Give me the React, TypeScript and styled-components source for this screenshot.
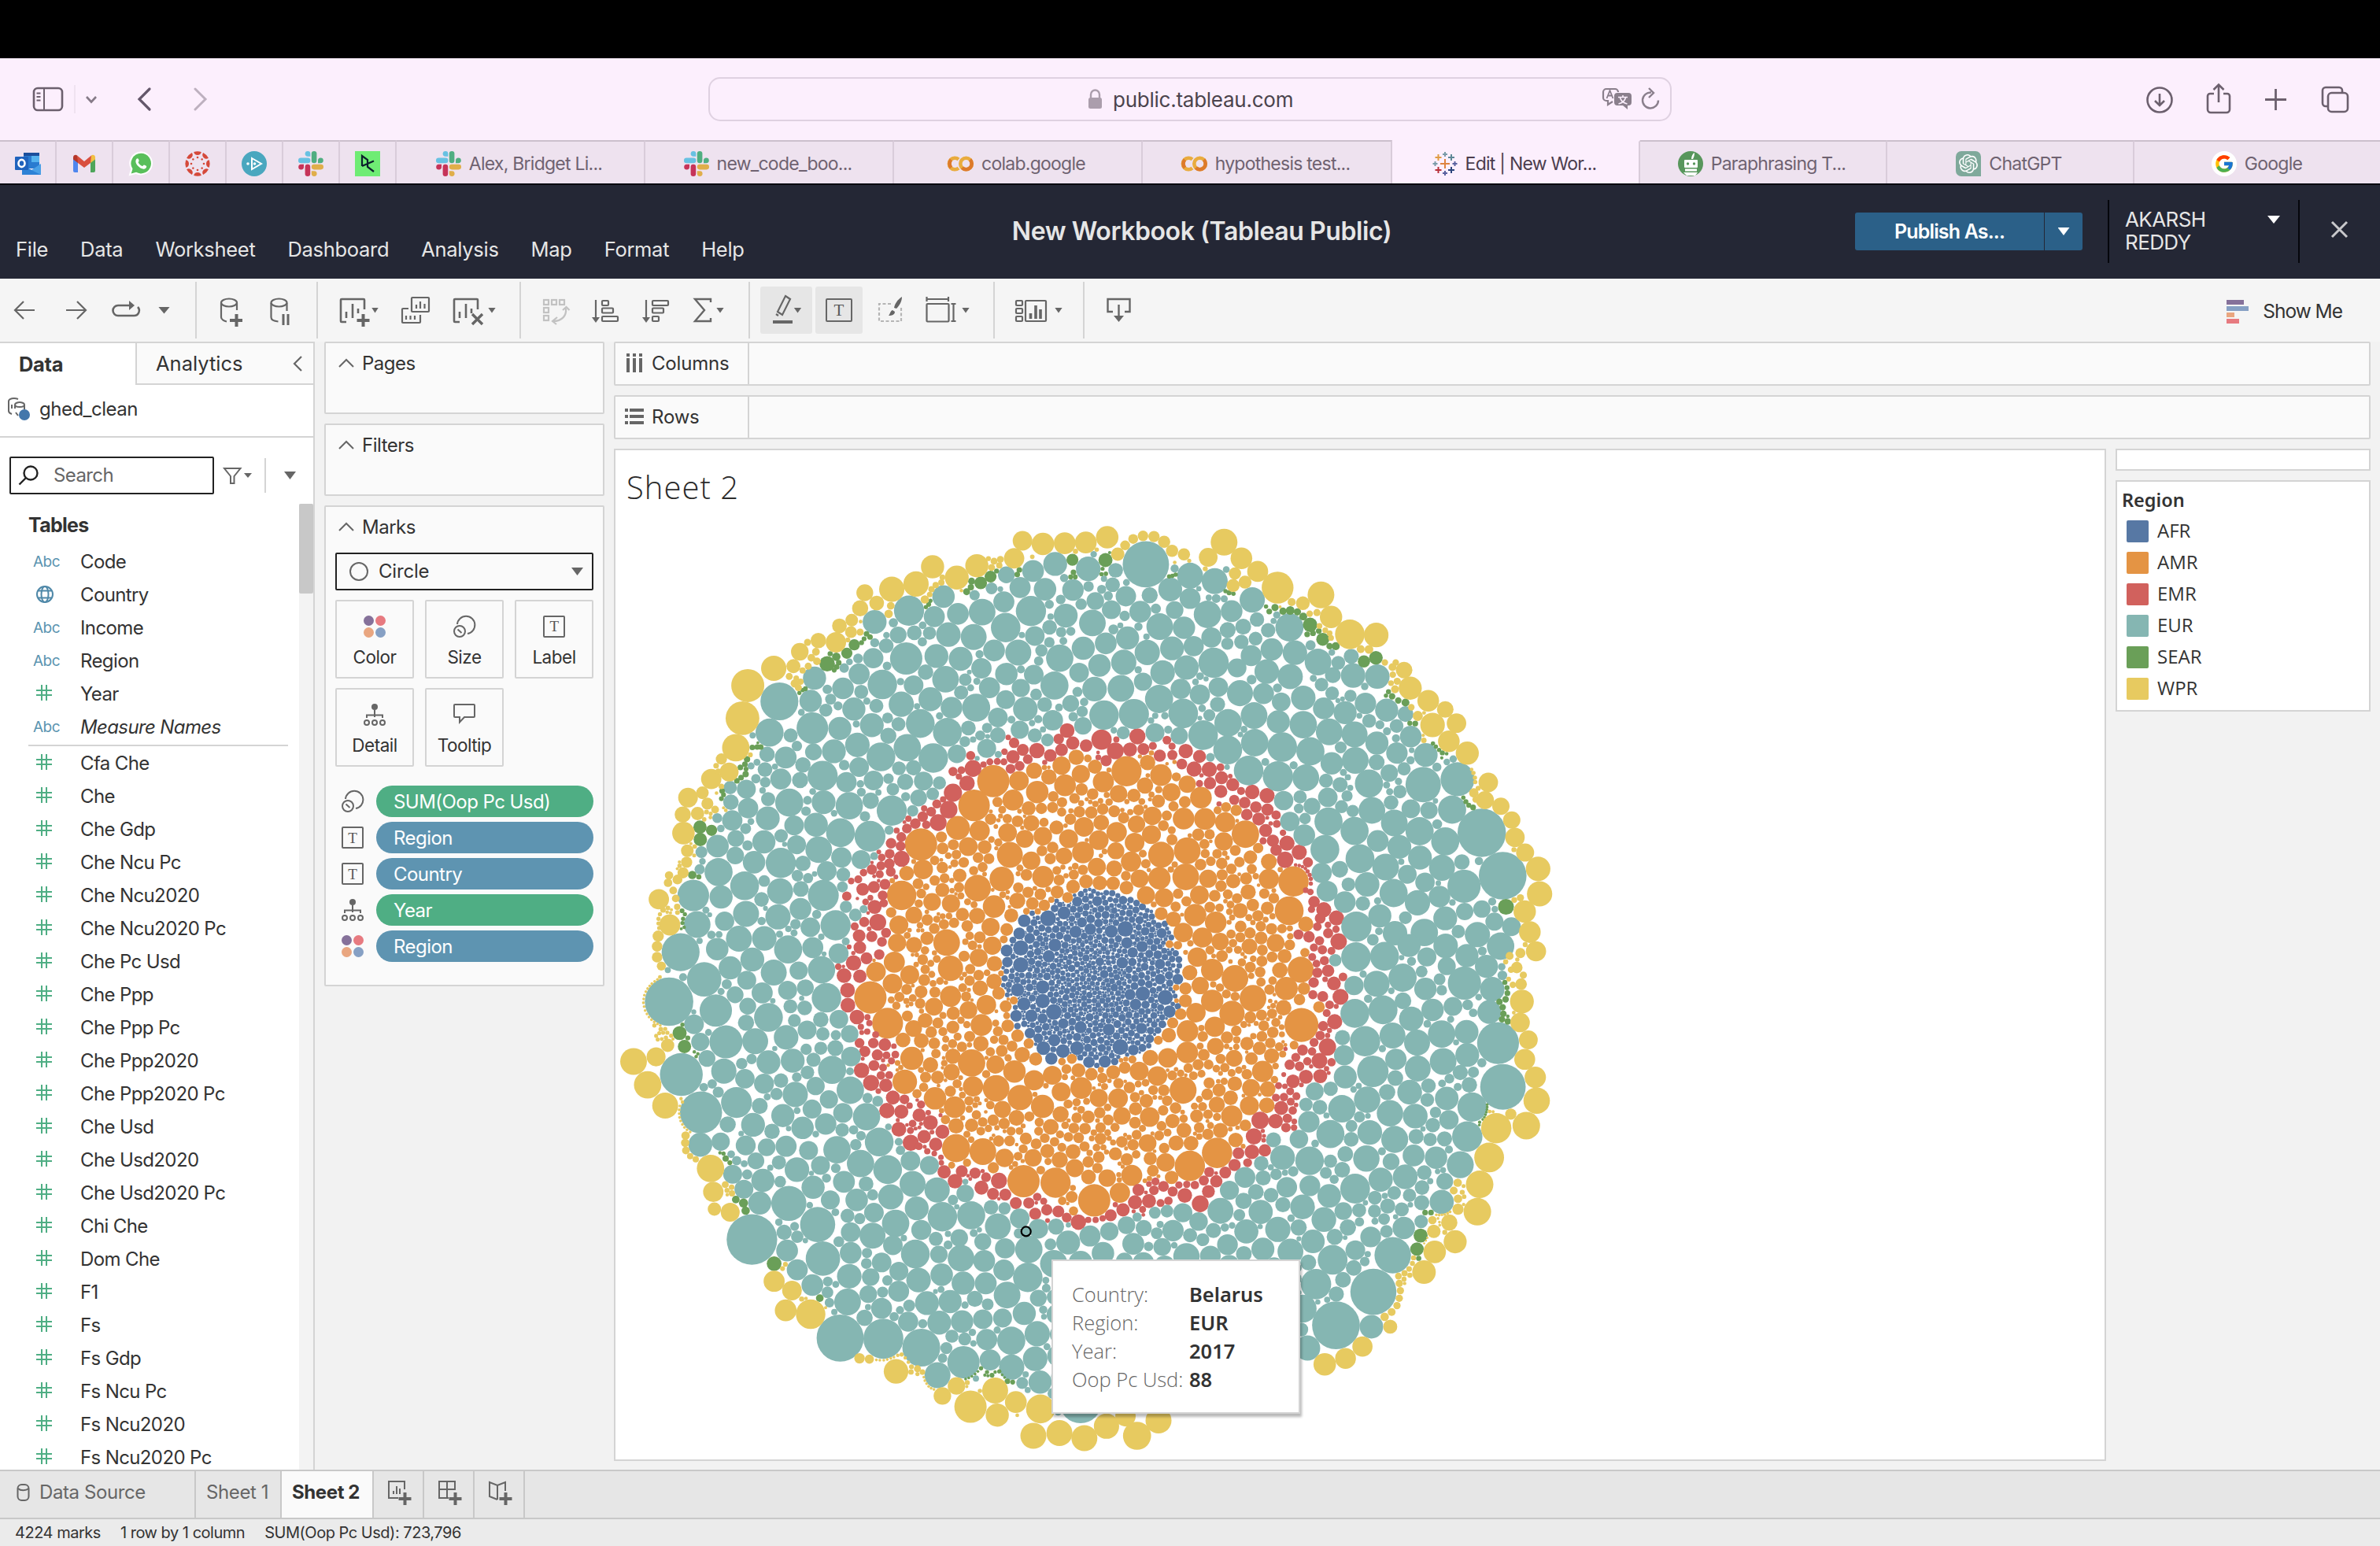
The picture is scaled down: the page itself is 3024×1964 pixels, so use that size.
import React from 'react';
import styled, { createGlobalStyle, css } from 'styled-components';
import { FcGoogle } from 'react-icons/fc';
import { SiOpenai } from 'react-icons/si';

const Global = createGlobalStyle`
  *, *::before, *::after { box-sizing: border-box; }
  body { margin: 0; background: #f2f2f2; color: #333; font-family: Inter, "Liberation Sans", sans-serif; }
`;

const LINE = '#d4d4d4';
const INK = '#666';

/* ------------------------------------------------------------------ */
/* Packed bubble data                                                   */
/* ------------------------------------------------------------------ */

type Region = 'AFR' | 'AMR' | 'EMR' | 'EUR' | 'SEAR' | 'WPR';
type Mark = { x: number; y: number; r: number; g: Region };

const COLORS: Record<Region, string> = {
  AFR: '#5778a4',
  AMR: '#e49444',
  EMR: '#d1615d',
  EUR: '#85b6b2',
  SEAR: '#6a9f58',
  WPR: '#e7ca60',
};

/* Each sector lists its leading marks as "x,y,r" in its own units. */
type Sector = { x: number; y: number; ux: number; uy: number; marks: Partial<Record<Region, string>> };

const SECTORS: Sector[] = [
  {
    x: 780, y: 420, ux: 2.24, uy: 2.24,
    marks: {
      WPR: '455,961,36 381,1010,47 366,1103,48 347,1187,39 328,1256,27 277,1276,29 306,1219,16 211,1329,28 196,1377,23 198,1430,32 252,1315,18 266,1346,17 238,1374,19 209,1480,18 207,1513,16 197,1543,16 157,1550,12 181,1562,14 511,955,20 529,914,25 582,882,22 575,914,11 551,887,10 632,887,29 675,858,17 642,840,21 677,824,18 701,790,23 714,746,24 748,775,21 788,783,11 782,806,12 791,736,36 860,721,36 907,672,33 976,703,34 1033,669,33 1139,648,29 1163,598,28 1221,607,32 1283,605,31 1343,603,31 1404,588,32 1434,636,19 1455,611,14 1478,593,14 1506,584,15 1537,586,16 1100,651,10 1082,656,10 1075,674,10 1066,649,7 1097,668,9 916,724,9 932,717,9 904,736,9 899,751,8 885,765,12 935,702,8 701,858,10 666,880,7 562,931,11 578,941,11 553,955,10 537,967,9 499,984,10 519,989,8 515,1004,12 531,999,9 525,1016,10 291,1238,8 297,1254,8 306,1297,8 288,1363,11',
      SEAR: '607,948,22 633,928,12 663,918,16 684,894,16 712,877,7 705,888,7 719,863,8 729,872,8 640,945,8 634,957,8 627,966,7 245,1413,19 278,1422,16 246,1448,19 379,1220,9 373,1234,8 360,1243,8 376,1248,7 375,1262,9 362,1272,8 350,1281,8 394,1186,8 408,1185,8 418,1185,8 308,1310,8 312,1321,7 306,1332,7 223,1549,12 1305,652,17 1399,653,20 1308,688,8 1300,701,7 1313,701,7 1388,693,6 1072,700,17 1044,718,18 1018,713,10 1016,730,9 1004,743,10 1154,681,8 1148,694,8 1089,684,7 901,769,6 896,779,7 888,787,6 545,1019,7 537,1023,6 528,1031,6',
      EUR: '471,1055,54 443,1144,40 560,1054,32 571,989,33 742,829,34 840,797,43 938,757,32 1193,684,31 1256,664,34 1117,695,24 1350,678,35 1428,682,21 1514,665,66 912,814,30 979,806,31 1048,801,38 1110,772,30 1156,731,30 1227,736,32 1187,798,43 1115,845,42 832,933,46 918,926,34 952,865,35 1024,872,37 987,934,34 1082,910,31 1151,916,37 1198,869,28 1286,811,34 1362,832,38 1416,794,27 1498,800,31 1269,932,39 1336,904,33 1400,890,31 1462,875,33 1518,916,36 1451,944,36 1382,953,32 764,1007,42 698,977,30 738,932,29 652,1018,31 853,1009,28 944,992,38 1046,961,29 1117,977,32 1195,979,28 1324,973,28 1254,1010,40 1368,1020,35 1443,1018,38 1506,999,26 818,1063,36 901,1049,34 961,1073,31 1031,1073,40 1069,1016,30 1115,1050,27 1158,1017,26 1171,1077,35 1093,1101,28 872,1118,41 949,1143,41 734,1123,34 683,1077,33 643,1132,33 565,1131,45 626,1197,34 693,1179,35 760,1213,41 835,1187,39 909,1216,42 698,1242,28 1061,1189,27 1395,1094,42 1480,1091,43 1335,1125,25 1540,1144,27 489,1215,31 568,1199,24 594,1267,43 475,1276,30 662,1285,29 739,1280,28 538,1236,22 530,1279,23 377,1305,27 436,1206,22 430,1249,21 499,1343,40 597,1342,34 670,1352,39 791,1366,43 382,1359,29 438,1388,34 337,1394,29 645,1429,41 729,1439,44 575,1406,34 513,1408,28 583,1477,38 427,1455,33 295,1467,32 347,1445,24 520,1463,27 475,1515,43 399,1513,32 298,1541,40 606,1538,28 538,1516,22 867,1330,24 881,1282,27 829,1284,23 853,1244,22 1198,1152,20 1234,1165,18 333,1342,22 331,1300,19 503,1152,20 810,1120,20 781,1153,23 747,1068,20 704,1028,20 809,866,24 855,860,21 775,897,21 887,972,22 1009,1131,21 1240,844,21 1226,1064,21 1300,1061,24 439,1333,20',
      AMR: '1080,1282,46 1025,1351,45 874,1462,46 1459,1254,43 1136,1336,30 1205,1313,32 1284,1294,31 1274,1238,26 1316,1214,22 1393,1284,30 1329,1262,26 1369,1241,20 1196,1252,23 1153,1281,28 1238,1270,22 1519,1229,22 1557,1265,31 979,1415,34 1041,1423,29 1127,1492,37 1338,1412,28 1431,1427,29 1294,1446,27 1335,1485,31 1380,1450,28 1482,1457,28 1530,1434,27 1472,1511,29 880,1533,28 833,1544,21',
      EMR: '1290,1138,21 1388,1164,29 1490,1155,23 1427,1196,24 1469,1192,20 1507,1191,17 1306,1174,19 1344,1181,18 1266,1162,15 1274,1193,18 1242,1209,18 1204,1195,22 1164,1193,17 1136,1213,19 1178,1220,14 1155,1239,14 1129,1247,14 1022,1246,24 1005,1288,22 965,1315,26 953,1363,25 923,1400,24 879,1383,15 903,1369,14 919,1347,13 883,1360,9 937,1334,9 858,1403,15 889,1406,12 834,1417,14 818,1441,14 789,1459,15 816,1467,14 785,1489,14 819,1503,23 784,1517,15 760,1523,13 788,1540,14 1401,1224,16 989,1251,11 982,1269,9 1052,1235,9 1070,1227,10 1091,1226,10 1110,1227,10',
    },
  },
  {
    x: 1300, y: 640, ux: 2.1778, uy: 2.1778,
    marks: {
      WPR: '390,105,17 412,130,17 445,140,17 512,148,26 556,106,37 604,151,30 649,187,29 704,232,44 586,193,17 614,217,18 581,226,18 824,252,37 774,275,19 743,272,11 852,313,31 904,361,41 977,363,34 793,304,9 813,301,10 934,402,11 957,403,12 1054,460,23 1071,510,32 1121,545,30 1168,569,23 1199,607,27 1133,612,34 1178,657,30 1229,690,32 1031,439,9 1022,452,11 1001,439,9 1023,473,9 1035,491,10 1018,496,8 1029,513,11 1092,587,14 1074,563,9 1287,771,27 1278,820,25 1322,837,24 1352,875,24 1361,923,27 1389,965,25 1425,1010,34 1429,1079,35 1388,1128,31 1402,1185,30 1419,1238,28 1380,1377,33 1375,1435,27 1398,1483,26 1388,1537,29 1247,800,13 1252,818,9 1259,787,7 1366,1283,16 1376,1243,14 1346,1251,11 1350,1289,9 1384,1304,10 1378,1329,16 1355,1331,9 1376,1090,10 1359,1096,8 1246,745,6 1250,758,6 1251,770,6 1241,735,5 820,338,8 836,350,8 848,358,8 852,371,8',
      SEAR: '794,335,20 829,375,18 943,436,17 976,426,19 775,312,11 739,295,12 759,299,10 719,297,10 697,287,10 681,298,8 672,284,6 848,394,9 865,394,11 818,352,8 802,358,8 786,361,8 1058,550,11 1038,544,9 1021,533,9 1011,520,7 1004,531,6 1070,607,7 1085,608,8 1134,663,6 1142,672,6 1151,681,6 1160,689,7 1336,1115,22 1218,813,6 1225,824,7 1233,834,7 1245,840,8 1333,1324,7 1339,1339,7 1340,1354,8 1335,1371,9 1318,1378,9 1327,1393,9 1329,1411,9 1325,1426,9 1341,1432,9 570,246,7 582,249,6 560,242,6 404,201,6 413,199,6 422,196,6',
      EUR: '462,199,36 530,214,36 634,266,35 407,237,33 462,262,29 510,306,38 577,297,30 737,342,39 378,340,37 445,343,31 521,370,28 527,440,42 452,453,34 344,411,36 412,400,33 472,394,28 688,403,31 752,412,34 816,438,37 908,422,21 913,475,34 980,478,34 739,478,35 674,464,34 600,524,36 775,537,34 665,525,29 631,420,29 592,454,26 567,606,38 639,586,37 706,603,32 775,611,38 832,566,30 891,578,32 498,640,41 566,681,40 641,661,38 717,673,41 795,685,39 847,631,37 917,638,36 443,580,41 376,540,39 386,467,34 436,512,28 489,528,28 624,738,41 705,754,42 782,758,37 854,718,31 919,710,37 979,662,32 1006,571,32 1058,582,22 1114,695,33 1107,777,49 1202,762,47 957,774,39 965,848,37 1187,846,39 1269,910,67 1327,1029,66 1027,883,37 1097,906,39 1168,934,39 845,879,39 917,905,39 835,956,40 738,879,27 778,917,30 932,982,40 1003,1005,37 1041,949,33 1098,979,33 1159,1007,36 1220,1058,46 952,1053,34 1025,1077,39 1091,1104,35 1152,1087,30 841,1072,29 826,1021,28 890,1102,30 922,1170,42 987,1140,32 1110,1186,38 1168,1147,33 1029,1188,34 1257,1192,35 1304,1156,25 1351,1170,26 1321,1224,38 1282,1280,32 1228,1250,32 1169,1223,34 921,1254,41 1000,1252,40 1068,1222,32 978,1328,36 1050,1311,39 1113,1342,31 1172,1279,25 1221,1326,46 1298,1343,34 918,1410,40 996,1400,40 1051,1375,23 1133,1400,31 1074,1425,34 1290,1406,33 1314,1492,58 1158,1467,38 1227,1461,33 1022,1471,36 946,1487,42 1090,1491,36 888,1526,28 1229,1525,33 1162,1543,37 981,933,30 978,715,22 1073,844,26 1123,848,24 366,632,28 432,642,24 843,812,27 540,507,27 538,555,21 714,548,26 609,340,22 566,349,22 565,387,17 604,382,20 643,373,19 678,350,20 647,320,20 857,474,22 872,440,19 855,524,19 1063,1025,26 1112,1047,27 877,777,21 912,850,17 881,838,18 900,1053,19',
      AMR: '393,753,41 492,813,30 615,914,38 559,881,28 503,872,30 444,871,30 454,776,24 344,717,22 382,971,36 454,960,37 450,1032,37 377,1036,31 748,1045,42 736,1126,40 680,1038,28 476,1138,31 533,1158,30 340,1083,25 390,1090,26 443,1186,27 496,1200,28 545,1211,24 523,1290,31 482,1254,27 586,1313,37 636,1368,37 768,1289,36 728,1341,32 523,1375,31 578,1410,35 770,1442,47 478,1408,27 530,1447,28 455,1459,30 454,1518,30 259,908,28 168,894,28 297,991,28 166,965,30 55,1032,30 322,1037,25 400,1533,27 352,1533,22 357,915,26 308,937,27 782,1163,21 680,990,22 416,1149,21 382,1134,18 286,1062,19 249,1050,19 212,1049,20 174,1045,19 138,1059,19 94,1074,18 461,1297,21 490,1333,24 428,1221,12 449,1341,17 449,1375,18 436,1412,16 403,1470,20',
      EMR: '450,684,20 488,699,18 439,720,15 473,734,21 515,735,21 549,758,18 547,796,18 580,777,18 517,773,17 634,797,20 675,807,21 613,827,16 644,839,16 676,846,17 652,872,18 619,860,16 671,904,18 700,861,13 702,886,11 691,932,17 730,939,21 764,964,21 725,985,23 788,992,14 700,958,16 719,910,9 805,1101,16 832,1123,21 867,1146,21 873,1211,23 791,1198,16 844,1188,14 822,1147,15 798,1122,10 814,1170,12 820,1209,13 828,1234,13 853,1237,11 800,1254,11 844,1292,17 860,1327,19 878,1364,22 814,1297,14 829,1363,15 862,1433,21 830,1445,14 842,1503,24 820,1541,22 822,1471,13 848,1386,12 378,697,17 412,671,10 413,695,14 546,729,11 488,774,10 840,1409,11 754,999,5 764,1001,5 773,1004,5 781,1009,5 787,1017,6 793,1027,6 796,1038,6 796,1051,6 795,1074,9 782,1069,8',
      AFR: '69,1147,22 283,1176,22 244,1183,18 145,1184,17 113,1132,18 205,1099,14 383,1188,14 329,1225,16 287,1215,16 88,1221,18 71,1252,17 85,1406,22 54,1376,20 54,1337,19 331,1355,20 393,1366,21 428,1315,15 405,1405,17 311,1385,16 269,1503,22 305,1511,15 149,1506,19 110,1514,19 56,1506,19 86,1484,17 237,1455,17 159,1448,17 226,1543,17 182,1545,16 78,1535,17 224,1301,12 160,1080,9 195,1072,7 230,1076,8 262,1084,7 297,1096,9 330,1115,10 356,1142,9 392,1162,9 410,1200,8 422,1244,9 432,1278,8 428,1390,9 385,1440,11 350,1480,12 330,1505,11',
    },
  },
  {
    x: 780, y: 1100, ux: 2.24, uy: 2.0524,
    marks: {
      WPR: '56,510,38 120,498,27 96,571,39 146,625,37 153,468,19 128,87,29 159,154,30 157,22,11 154,44,12 182,41,14 126,183,16 123,210,15 123,238,15 135,261,13 169,64,11 176,85,11 180,107,9 204,703,12 203,722,12 205,742,11 217,757,9 233,765,9 275,789,39 283,850,29 286,895,19 331,903,27 317,831,10 335,838,8 336,854,9 456,1083,30 507,1107,28 489,1159,31 560,1169,42 488,1039,7 480,1050,7 699,1284,15 727,1286,13 803,1318,35 935,1382,25 975,1356,25 1015,1410,46 1085,1368,37 1091,1432,33 1144,1398,31 1214,1416,41 1194,1486,37 1268,1479,37 1339,1492,37 1402,1461,36 1456,1435,29 1489,1486,40 1550,1446,37 864,1311,10 847,1306,7 878,1320,8 864,1325,6 140,115,8 131,126,6 127,138,6 127,150,6 129,162,6 124,296,4 116,301,4 108,307,4 102,313,4 96,320,4 91,328,4 87,337,4 85,347,4 84,357,4 86,367,4 89,377,4 94,386,4 100,394,4 107,401,4 115,407,4 124,412,4 132,416,4 146,425,6 152,435,6 148,448,6 163,443,6 191,607,5 195,616,5 188,626,4 186,636,4 186,646,4 187,656,4 190,665,4 195,674,4 201,682,4 208,688,4 217,694,4 747,1288,4 757,1289,4 768,1289,4 778,1287,4 788,1284,4 797,1281,4 808,1276,5 819,1274,6 829,1283,5 838,1294,5 882,1333,4 885,1342,4 890,1350,4 896,1357,4 903,1362,4 911,1365,4',
      SEAR: '187,436,20 201,471,19 195,414,6 229,485,5 239,490,5 234,497,5 456,1037,21 586,1127,11 347,870,11 369,879,13 375,899,12 302,748,5 312,750,6 318,763,9 330,774,7 194,117,7 202,126,6 197,138,6 195,149,6 200,160,5 1120,1344,8 1135,1346,7 1076,1328,7 1062,1320,6 1045,1310,6 1097,1318,6 1036,1318,4 1028,1325,4 1019,1331,4 1010,1335,4 1001,1338,4 1085,1320,5 1105,1327,4 1112,1334,4',
      EUR: '157,354,69 190,225,54 192,544,61 248,643,60 257,296,49 226,77,45 290,377,46 237,153,38 319,459,47 402,457,37 440,395,41 313,535,36 246,727,34 349,617,44 228,413,28 246,459,26 265,502,24 338,804,27 498,880,50 393,974,72 415,879,33 580,935,50 595,1024,49 493,1003,31 522,1053,30 565,1093,31 670,1070,35 665,1137,38 644,1231,67 767,1233,57 875,1256,54 921,1328,37 995,1294,46 372,52,41 305,81,33 376,125,37 473,66,37 596,77,44 467,133,36 531,112,31 631,155,43 559,160,28 356,190,37 428,189,35 294,217,32 496,218,40 394,244,34 566,213,30 331,266,33 455,278,37 591,271,39 605,344,42 422,331,30 621,532,40 673,585,39 440,512,34 509,508,34 490,447,35 516,596,36 481,651,33 537,683,32 396,675,34 719,654,39 755,720,41 635,740,39 702,776,39 779,792,41 490,731,30 521,792,35 424,820,33 567,838,33 850,829,37 788,863,36 862,893,34 920,845,36 935,915,42 1017,911,40 1093,940,37 1000,854,25 802,932,39 736,964,37 691,871,32 740,904,28 794,989,28 858,1012,41 867,1080,35 933,1066,32 988,1023,38 994,1088,33 891,1140,34 957,1136,33 926,1191,34 991,1188,32 1119,1119,38 1178,1073,42 1181,1000,39 1168,1167,33 1131,1238,40 1132,1307,36 1071,1288,30 1205,1220,36 1199,1285,35 1213,1346,33 1328,1398,60 1061,1235,30 1050,1182,28 1106,1179,27 1155,919,28 1208,946,28 1293,982,34 1355,965,30 1054,1030,31 1110,1054,30 674,1009,31 674,955,28 762,1034,28 811,1057,27 844,769,28 898,781,27 304,719,26 404,769,24 675,497,28 671,438,25 370,843,27 1252,1037,39 1328,1035,34 1392,1010,32 1459,937,25 1410,953,26 545,318,24 550,428,27 543,370,21 526,273,26 378,298,27 345,336,24 381,366,24 376,409,23 574,574,26 564,634,27 612,609,26 652,644,28 554,742,27 588,781,27 616,871,27 731,1072,25 724,1117,25 925,1013,25 983,970,25 1208,1127,24 687,128,18 450,692,22 324,674,23 1508,944,23 1162,1348,17',
      AMR: '819,77,42 730,343,46 779,410,44 848,502,33 828,563,35 914,606,32 970,629,31 974,736,40 1050,745,38 1166,822,46 1257,826,43 1367,872,46 1440,852,29 947,200,38 958,267,36 958,340,30 1018,514,39 1088,580,38 1156,604,36 1220,627,33 1140,536,32 1330,579,31 1035,58,38 1104,34,35 1082,106,32 1248,546,27 1196,559,29 1046,415,31 798,251,30 842,284,27 793,307,28 811,154,27 746,276,28 1060,362,28 1474,807,30 1446,652,25 1525,655,28 1547,548,28 1495,535,27 1022,575,29 1077,208,26 1083,255,22 1082,301,22 1072,159,26 806,201,26 854,206,23 1148,91,23 1131,129,20 1118,166,18 1191,98,18 1095,332,18 1115,366,17 1121,417,18 1149,443,18 1162,492,22 853,424,24 886,403,21 875,456,21 823,454,21 901,519,22 965,496,22 1086,518,26 1273,589,27 1380,605,26 1435,606,28 1322,533,20 1288,530,14 1359,543,18 1421,538,20 1454,526,17 1351,811,21 1404,814,25 1193,761,25 974,678,22 1018,676,19 1303,863,17 1080,787,16',
      EMR: '751,147,24 742,107,20 740,55,17 708,61,18 698,182,18 700,213,18 682,253,22 655,286,21 700,288,19 665,324,21 666,363,21 692,394,21 734,184,16 719,241,17 755,231,15 763,198,14 705,533,22 732,566,23 774,572,19 771,466,18 714,484,16 750,493,16 699,462,14 794,604,20 777,638,22 818,641,20 811,687,21 845,722,23 869,650,19 901,669,21 883,706,19 916,726,19 935,693,20 827,609,14 940,798,19 971,822,21 990,796,17 1028,801,16 1046,839,20 1096,821,23 1079,855,17 1114,857,17 1144,879,17 1181,879,16 1199,907,17 1232,897,16 1265,901,17 1322,929,22 1414,911,17 1449,897,19 1205,863,12 1289,917,14 1483,877,20 1493,845,17 1523,874,20 1059,812,14 765,77,14 768,97,12 1350,923,9 1371,923,9 1391,919,9 850,672,11 844,690,10 868,731,11 892,744,9 912,750,8 931,760,8 703,420,9 721,432,9 727,410,9 745,440,10 776,494,11 801,492,11 797,470,8',
      AFR: '1168,143,18 1154,176,17 1158,214,22 1158,258,22 1118,221,17 1120,251,15 1281,122,18 1149,323,19 1167,360,19 1145,391,17 1188,391,18 1221,352,20 1220,315,18 1252,381,23 1237,237,17 1184,436,15 1208,449,14 1222,475,20 1246,502,18 1279,483,20 1132,288,9 1124,310,9 1117,275,8 1168,412,9',
    },
  },
  {
    x: 1480, y: 1300, ux: 2.8, uy: 2.8,
    marks: {
      WPR: '1318,192,38 1323,275,47 1286,364,49 1231,323,20 1179,373,54 1154,477,53 1120,573,49 1112,670,49 1033,777,41 960,813,40 922,885,42 1012,709,29 957,740,24 1043,661,20 1043,624,15 1042,567,15 1028,595,14 952,700,15 1058,601,9 1063,579,7 885,834,9 881,854,9 869,874,10 853,889,11 831,899,12 851,910,9 834,925,13 838,951,13 834,978,13 826,1004,13 807,1027,14 782,1044,15 802,1079,25 703,1150,36 643,1192,37 569,1213,40 966,681,5 976,682,5 986,681,5 996,680,5 1006,676,5 1015,671,5 972,694,5 977,707,5 978,718,5 934,763,4 929,773,4 923,783,4',
      SEAR: '910,755,25 897,803,24 926,673,10 947,673,10 1120,352,6 1119,362,5 1131,342,5 1137,334,5 1141,325,5 1144,316,5 1146,307,5 1147,298,5 1147,289,5',
      EUR: '1203,226,81 1093,298,52 1076,403,54 1051,503,48 985,635,43 811,825,65 742,955,82 609,1074,85 735,1079,42 508,1155,45 538,928,54 490,1015,50 597,841,53 740,171,56 822,128,38 900,161,46 989,133,47 1076,112,42 720,272,47 871,245,44 801,320,47 630,304,49 891,330,44 1003,267,42 589,394,50 729,388,44 818,413,48 717,481,47 885,470,39 965,478,40 515,489,51 419,477,44 768,556,43 677,588,53 855,546,44 585,614,42 490,653,44 566,698,44 402,733,45 341,671,43 290,740,43 198,667,46 285,548,37 527,776,42 850,728,40 447,812,46 349,803,41 223,787,37 642,191,41 638,115,35 477,412,33 516,578,37 533,242,32 678,807,35 996,562,30 912,705,24 77,829,47 120,705,33 64,674,34 162,828,37 230,594,34 805,492,30 642,465,28 631,521,28 791,245,29 820,195,28 1051,175,27 894,403,27 995,411,27 944,413,24 938,222,26 923,531,26 915,584,26 914,638,27 793,650,27 816,603,24 843,662,25 672,870,28 634,912,28 610,963,27 476,726,29 350,550,27 343,498,26 173,737,27 265,682,21 280,632,29 324,600,28 378,611,26 420,645,27 281,820,28 90,754,25',
      AMR: '186,461,54 89,507,54 65,238,48 348,171,38 238,330,38 301,293,34 81,30,37 80,105,38 307,230,32 252,415,26 366,234,28 363,292,28 180,82,30 234,265,26 380,116,27 249,215,26 24,548,24 40,426,27',
      EMR: '579,83,30 551,136,27 553,188,25 502,190,25 456,206,24 414,301,25 394,348,26 339,345,31 317,402,29 310,457,26 356,452,22 262,462,21 248,504,22 215,531,21 183,562,22 155,598,23 126,642,30 71,612,26 436,338,17 446,242,14 424,262,15 448,279,14 455,310,15 158,529,18 139,559,18 431,371,17 479,153,17 466,121,16 555,43,16 531,68,16 524,100,15 507,135,15 28,598,18 13,631,15 107,575,15 78,573,13 50,575,13',
    },
  },
];

const CENTER = { x: 1387, y: 1245 };

function makeRandom(seed: number) {
  let s = seed;
  return () => {
    s = (s + 0x6d2b79f5) | 0;
    let t = Math.imul(s ^ (s >>> 15), 1 | s);
    t = (t + Math.imul(t ^ (t >>> 7), 61 | t)) ^ t;
    return ((t ^ (t >>> 14)) >>> 0) / 4294967296;
  };
}

function leadingMarks(): Mark[] {
  const out: Mark[] = [];
  for (const s of SECTORS) {
    for (const g of Object.keys(s.marks) as Region[]) {
      for (const item of s.marks[g]!.split(' ')) {
        const [a, b, c] = item.split(',').map(Number);
        const m = { x: s.x + a / s.ux, y: s.y + b / s.uy, r: c / s.ux, g };
        // sectors share their edges: a mark listed in both is kept once
        const twin = out.some((o) => Math.hypot(o.x - m.x, o.y - m.y) < Math.max(o.r, m.r) * 0.6);
        if (!twin) out.push(m);
      }
    }
  }
  return out;
}

function packMarks(): Mark[] {
  const rnd = makeRandom(4224);
  const lead = leadingMarks();
  const all: Mark[] = [];
  const CELL = 14;
  const grid = new Map<number, Mark[]>();
  const cellsOf = (x: number, y: number, r: number, fn: (k: number) => void) => {
    for (let i = Math.floor((x - r) / CELL); i <= Math.floor((x + r) / CELL); i++)
      for (let j = Math.floor((y - r) / CELL); j <= Math.floor((y + r) / CELL); j++) fn(i * 1000 + j);
  };
  const add = (m: Mark) => {
    all.push(m);
    cellsOf(m.x, m.y, m.r, (k) => {
      const c = grid.get(k);
      if (c) c.push(m);
      else grid.set(k, [m]);
    });
  };
  const near = (x: number, y: number, r: number) => {
    const set = new Set<Mark>();
    cellsOf(x, y, r, (k) => grid.get(k)?.forEach((m) => set.add(m)));
    return [...set];
  };
  lead.forEach(add);

  // outline of the whole cluster, one radius for every 4 degrees
  const BINS = 90;
  const outline = new Array(BINS).fill(0);
  const binOf = (x: number, y: number) =>
    Math.floor(((Math.atan2(y - CENTER.y, x - CENTER.x) + Math.PI) / (2 * Math.PI)) * BINS) % BINS;
  for (const m of lead) {
    const b = binOf(m.x, m.y);
    outline[b] = Math.max(outline[b], Math.hypot(m.x - CENTER.x, m.y - CENTER.y));
  }
  for (let b = 0; b < BINS; b++) if (outline[b] < 500) outline[b] = 540;
  const inside = (x: number, y: number) => {
    const b = binOf(x, y);
    const lim = Math.min(outline[b], outline[(b + 1) % BINS], outline[(b + BINS - 1) % BINS]);
    return Math.hypot(x - CENTER.x, y - CENTER.y) < lim - 4;
  };

  const memo = new Map<number, Region>();
  const regionAt = (x: number, y: number): Region => {
    const k = Math.floor(x / 5) * 2000 + Math.floor(y / 5);
    const hit = memo.get(k);
    if (hit) return hit;
    let best = 1e9;
    let g: Region = 'EUR';
    for (const m of lead) {
      const d = Math.hypot(m.x - x, m.y - y) - m.r;
      if (m.g === 'SEAR' && d > 3) continue;
      if (d < best) {
        best = d;
        g = m.g;
      }
    }
    memo.set(k, g);
    return g;
  };

  const place = (x: number, y: number, r: number, g: Region): boolean => {
    const around = near(x, y, r * 3);
    let clear = 1e9;
    for (const m of around) clear = Math.min(clear, Math.hypot(m.x - x, m.y - y) - m.r);
    if (clear < r * 0.7) return false;
    const ring = around
      .map((m) => ({ m, d: Math.hypot(m.x - x, m.y - y) - m.r }))
      .filter((o) => o.d < r * 2.6)
      .sort((a, b) => a.d - b.d)
      .slice(0, 7)
      .map((o) => o.m);
    let bx = x;
    let by = y;
    let bd = 1e9;
    const free = (px: number, py: number) => around.every((m) => Math.hypot(m.x - px, m.y - py) >= m.r + r - 0.12);
    for (let i = 0; i < ring.length; i++) {
      for (let j = i + 1; j < ring.length; j++) {
        const A = ring[i];
        const B = ring[j];
        const ra = A.r + r;
        const rb = B.r + r;
        const dx = B.x - A.x;
        const dy = B.y - A.y;
        const d = Math.hypot(dx, dy);
        if (d > ra + rb || d < 0.5) continue;
        const a = (ra * ra - rb * rb + d * d) / (2 * d);
        const h2 = ra * ra - a * a;
        if (h2 < 0) continue;
        const h = Math.sqrt(h2);
        for (const s of [1, -1]) {
          const px = A.x + (a * dx) / d - (s * h * dy) / d;
          const py = A.y + (a * dy) / d + (s * h * dx) / d;
          const q = Math.hypot(px - x, py - y);
          if (q < bd && q < r * 1.8 && free(px, py)) {
            bd = q;
            bx = px;
            by = py;
          }
        }
      }
    }
    if (bd > 1e8 && clear < r) return false;
    add({ x: bx, y: by, r, g });
    return true;
  };

  const RANGE: Record<Region, [number, number]> = {
    AFR: [99, 0],
    AMR: [2.2, 12],
    EMR: [2.2, 7],
    EUR: [3, 14],
    SEAR: [1.8, 3.4],
    WPR: [1.7, 3.6],
  };
  const R0 = 610;
  for (const base of [14, 12, 10.5, 9, 8, 7, 6.2, 5.5, 4.8, 4.2, 3.6, 3.1, 2.7, 2.3, 2]) {
    const tries = base > 9 ? 5000 : base > 4 ? 8000 : 6500;
    for (let i = 0; i < tries; i++) {
      const t = rnd() * Math.PI * 2;
      const q = Math.sqrt(rnd()) * R0;
      const x = CENTER.x + Math.cos(t) * q;
      const y = CENTER.y + Math.sin(t) * q;
      const r = base * (0.92 + rnd() * 0.16);
      const skip = rnd();
      if (!inside(x, y)) continue;
      const g = regionAt(x, y);
      if (r < RANGE[g][0] || r > RANGE[g][1]) continue;
      if (g === 'AMR' && base > 7 && skip > 0.12) continue;
      if (g === 'EUR' && base < 4 && skip > 0.35) continue;
      place(x, y, r, g);
    }
  }

  // the inner disc: many small marks, finest around the middle
  const steps: [number, number][] = [
    [7, 12], [5.2, 40], [4.4, 80], [3.7, 130], [3.1, 190], [2.7, 230], [2.3, 300], [1.9, 380], [1.6, 450], [1.3, 650], [1.05, 700],
  ];
  for (const [base, want] of steps) {
    let got = 0;
    for (let i = 0; i < 14000 && got < want; i++) {
      const t = rnd() * Math.PI * 2;
      const q = Math.pow(rnd(), base < 2 ? 0.7 : 0.5) * 114;
      const x = CENTER.x + Math.cos(t) * q;
      const y = 1242 + Math.sin(t) * q;
      if (q > 104 && base < 1.7) continue;
      if (q < 50 && base > 3.5 && rnd() > 0.15) continue;
      if (regionAt(x, y) !== 'AFR') continue;
      if (place(x, y, base * (0.92 + rnd() * 0.16), 'AFR')) got++;
    }
  }
  return all;
}

const MARKS = packMarks();
const ORDER: Region[] = ['AFR', 'AMR', 'EMR', 'EUR', 'SEAR', 'WPR'];

/* ------------------------------------------------------------------ */
/* Small drawing helper: a glyph drawn in window units                  */
/* ------------------------------------------------------------------ */

type GlyphProps = { x: number; y: number; w: number; h: number; color?: string; sw?: number; children: React.ReactNode };
const GlyphSvg = styled.svg`
  display: block;
  flex: none;
  overflow: visible;
`;
const Glyph = ({ x, y, w, h, color = INK, sw = 2, children }: GlyphProps) => (
  <GlyphSvg width={w} height={h} viewBox={`${x} ${y} ${w} ${h}`} fill="none" stroke={color} strokeWidth={sw}>
    {children}
  </GlyphSvg>
);

const Caret = styled.span<{ $w: number; $h: number; $c?: string; $ml?: number; $mt?: number }>`
  flex: none;
  width: ${(p) => p.$w}px;
  height: ${(p) => p.$h}px;
  margin-left: ${(p) => p.$ml ?? 0}px;
  margin-top: ${(p) => p.$mt ?? 0}px;
  background: ${(p) => p.$c ?? INK};
  clip-path: polygon(0 0, 100% 0, 50% 100%);
`;

/* ------------------------------------------------------------------ */
/* Browser chrome                                                       */
/* ------------------------------------------------------------------ */

const Window = styled.div`
  width: 3024px;
  height: 1964px;
  display: flex;
  flex-direction: column;
  overflow: hidden;
`;
const Notch = styled.div`
  height: 74px;
  flex: none;
  background: #000;
`;
const BrowserBar = styled.div`
  height: 104px;
  flex: none;
  background: #fceffd;
  display: grid;
  grid-template-columns: 900px 1224px 900px;
  align-items: center;
`;
const NavGroup = styled.div`
  display: flex;
  align-items: center;
  padding-left: 41px;
`;
const NavRule = styled.div`
  width: 2px;
  height: 36px;
  margin: 0 13px;
  background: #efe2f0;
`;
const NavArrows = styled.div`
  display: flex;
  margin-left: 25px;
`;
const Address = styled.div`
  height: 56px;
  border: 2px solid #dfd1e1;
  border-radius: 15px;
  display: flex;
  align-items: center;
  padding: 0 12px 0 480px;
`;
const Url = styled.span`
  margin-left: 13px;
  width: 625px;
  font-size: 26px;
  letter-spacing: -0.25px;
  color: #4b444d;
`;
const WindowActions = styled.div`
  display: flex;
  align-items: center;
  justify-content: flex-end;
  gap: 42px;
  padding-right: 38px;
`;
const TabStrip = styled.div`
  height: 57px;
  flex: none;
  display: flex;
  border-bottom: 2px solid #05070f;
  background: #eee2ef;
`;
const tabBase = css`
  flex: none;
  display: flex;
  align-items: center;
  justify-content: center;
  border-top: 2px solid #cbbfcc;
  border-right: 2px solid #d9ccda;
  padding-top: 2px;
`;
const PinnedTab = styled.div`
  ${tabBase}
  width: 72px;
`;
const Tab = styled.div<{ $active?: boolean; $w: number }>`
  ${tabBase}
  width: ${(p) => p.$w}px;
  padding-right: 3px;
  gap: 10px;
  font-size: 23px;
  letter-spacing: -0.75px;
  white-space: nowrap;
  color: ${(p) => (p.$active ? '#4b3d4d' : '#6f6271')};
  ${(p) =>
    p.$active &&
    css`
      background: #fceffd;
      border-top-color: #fceffd;
    `}
`;
const RoundWhite = styled.span`
  width: 32px;
  height: 32px;
  border-radius: 50%;
  background: #fff;
  display: flex;
  align-items: center;
  justify-content: center;
`;
const GptBadge = styled(RoundWhite)`
  border-radius: 7px 7px 0 7px;
  background: #7fa99b;
  color: #fff;
`;

const Slack = () => (
  <GlyphSvg width="32" height="32" viewBox="0 0 32 32">
    <path d="M12 0a3.4 3.4 0 0 1 3.4 3.4v3.3H12A3.35 3.35 0 0 1 12 0z" fill="#68c1e2" />
    <rect x="0" y="8.6" width="15.4" height="6.6" rx="3.3" fill="#68c1e2" />
    <rect x="16.8" y="0" width="6.6" height="15.2" rx="3.3" fill="#4fae81" />
    <path d="M25 15.2v-3.3a3.4 3.4 0 1 1 3.4 3.3z" fill="#4fae81" />
    <rect x="16.8" y="16.8" width="15.2" height="6.6" rx="3.3" fill="#e0ae4a" />
    <path d="M16.8 25.2h3.3a3.4 3.4 0 1 1-3.3 3.4z" fill="#e0ae4a" />
    <rect x="8.6" y="16.8" width="6.6" height="15.2" rx="3.3" fill="#c63459" />
    <path d="M7 16.8v3.3a3.4 3.4 0 1 1-3.5-3.3z" fill="#c63459" />
  </GlyphSvg>
);
const Outlook = () => (
  <GlyphSvg width="34" height="32" viewBox="0 0 34 32">
    <rect x="12" y="2" width="20" height="20" fill="#2a7bd0" />
    <rect x="12" y="2" width="20" height="4" fill="#1b4f9c" />
    <rect x="22" y="6" width="10" height="8" fill="#56b3ee" />
    <path d="M10 18l12 6 12-8v14H10z" fill="#4aa0e6" />
    <path d="M10 18l24 12H10z" fill="#2e82d6" />
    <rect x="1" y="7" width="17" height="17" rx="1" fill="#1f63bd" />
    <ellipse cx="9.5" cy="15.5" rx="4" ry="4.6" fill="none" stroke="#fff" strokeWidth="2.6" />
  </GlyphSvg>
);
const Gmail = () => (
  <GlyphSvg width="30" height="24" viewBox="0 0 30 24">
    <path d="M1 4v17a2 2 0 0 0 2 2h4V9z" fill="#4f86ee" />
    <path d="M29 4v17a2 2 0 0 1-2 2h-4V9z" fill="#4ea55b" />
    <path d="M23 4v7l6-4.5V4c0-3-3.2-4-5-2.5z" fill="#f1bf42" />
    <path d="M1 4v2.5L7 11V4L6 1.5C4.2 0 1 1 1 4z" fill="#b5372b" />
    <path d="M6 1.5L15 9l9-7.5-1 9.5-8 6-8-6z" fill="#d9503f" />
  </GlyphSvg>
);
const WhatsApp = () => (
  <GlyphSvg width="32" height="32" viewBox="0 0 32 32">
    <path d="M16 .5A15 15 0 0 1 31 15.500 15 15 0 0 1 9.500 28.900L.5 31.500l2.600-8.800A15 15 0 0 1 16 .5z" fill="#fff" />
    <path d="M16.200 2.800A12.800 12.800 0 1 1 10 26.800l-6.300 1.700 1.800-6A12.800 12.800 0 0 1 16.200 2.800z" fill="#59bf5b" />
    <path d="M12 9.200c.8 0 1.700 2.600 1.600 3.200s-1.200 1.400-.9 2c1.200 2.200 2.800 3.700 5 4.700.8.300 1.600-1.600 2.300-1.500.6.100 3.200 1.300 3.200 1.900 0 1.900-1.800 3.300-3.800 3.200-4.700-.4-9.600-5.400-10-9.200-.2-2.200 1-4.300 2.600-4.300z" fill="#fff" />
  </GlyphSvg>
);
const CanvasRing = () => (
  <GlyphSvg width="32" height="32" viewBox="-16 -16 32 32">
    {[0, 45, 90, 135, 180, 225, 270, 315].map((a) => (
      <g key={a} transform={`rotate(${a})`} fill="#d5493a">
        <path d="M-4.8 -14.9A16 16 0 0 1 4.8 -14.9A4.9 4.9 0 0 1 -4.8 -14.9z" />
        <circle cx="0" cy="-8" r="1.3" />
      </g>
    ))}
  </GlyphSvg>
);
const PlayCircle = () => (
  <GlyphSvg width="32" height="32" viewBox="0 0 32 32">
    <circle cx="16" cy="16" r="16" fill="#4aa7bf" />
    <path d="M13 9l12 7-12 7z" fill="none" stroke="#fff" strokeWidth="2" />
    <circle cx="16.5" cy="16" r="1.8" fill="#fff" />
    <circle cx="8" cy="16" r="1.8" fill="#fff" />
  </GlyphSvg>
);
const DataCamp = () => (
  <GlyphSvg width="32" height="32" viewBox="0 0 32 32">
    <rect width="32" height="32" fill="#6fec74" />
    <path d="M9 19V6l7 5v9l8 6M9 19l15-6.500" fill="none" stroke="#0c1f2c" strokeWidth="2.2" />
  </GlyphSvg>
);
const Colab = () => (
  <GlyphSvg width="33" height="20" viewBox="0 0 33 20" fill="none" strokeWidth="4.6">
    <path d="M14 4.5A7.3 7.3 0 1 0 14 15.5" stroke="#e9ac3e" />
    <path d="M4.5 5A7.3 7.3 0 0 0 4.500 15" stroke="#dd7a2b" />
    <circle cx="23.5" cy="10" r="7.2" stroke="#e9ac3e" />
    <path d="M28.6 4.9A7.2 7.2 0 0 1 18.4 15.1" stroke="#dd7a2b" />
  </GlyphSvg>
);
const TableauMark = () => {
  const plus = (x: number, y: number, s: number, c: string) => (
    <path key={c + x + y} d={`M${x - s} ${y}h${2 * s}M${x} ${y - s}v${2 * s}`} stroke={c} strokeWidth="2" />
  );
  return (
    <GlyphSvg width="32" height="32" viewBox="0 0 32 32" fill="none">
      {plus(16, 16, 6, '#df8440')}
      {plus(7.5, 8, 4, '#e09c45')}
      {plus(24, 8, 4, '#5e8796')}
      {plus(7.5, 24, 4, '#b8303a')}
      {plus(24, 24, 4, '#2c457c')}
      {plus(16, 4, 3, '#7b9ba8')}
      {plus(16, 28, 3, '#5a62a0')}
      {plus(3.5, 16, 3, '#7b9ba8')}
      {plus(28.5, 16, 3, '#5a62a0')}
    </GlyphSvg>
  );
};
const QuillBot = () => (
  <GlyphSvg width="32" height="32" viewBox="0 0 32 32">
    <circle cx="16" cy="16" r="16" fill="#58965c" />
    <path d="M17 10c0-4 2-7 4-8 0 4-1 6-2 8z" fill="#fff" />
    <rect x="8" y="11" width="17" height="10" rx="1" fill="#fff" />
    <circle cx="12.5" cy="16" r="1.7" fill="#58965c" />
    <circle cx="20.5" cy="16" r="1.7" fill="#58965c" />
    <path d="M9 22.5h15v3H9zM7 27h18l-3 4h-11z" fill="#fff" />
  </GlyphSvg>
);

const PINNED = [Outlook, Gmail, WhatsApp, CanvasRing, PlayCircle, Slack, DataCamp];
const TABS: { label: string; icon: React.ReactNode; w: number; active?: boolean }[] = [
  { label: 'Alex, Bridget Li...', icon: <Slack />, w: 316 },
  { label: 'new_code_boo...', icon: <Slack />, w: 316 },
  { label: 'colab.google', icon: <Colab />, w: 316 },
  { label: 'hypothesis test...', icon: <Colab />, w: 317 },
  { label: 'Edit | New Wor...', icon: <TableauMark />, w: 315, active: true },
  { label: 'Paraphrasing T...', icon: <QuillBot />, w: 314 },
  { label: 'ChatGPT', icon: <GptBadge><SiOpenai size={24} /></GptBadge>, w: 314 },
  { label: 'Google', icon: <RoundWhite><FcGoogle size={26} /></RoundWhite>, w: 316 },
];

const P = '#6c606e';

function Browser() {
  return (
    <>
      <BrowserBar>
        <NavGroup>
          <Glyph x={41} y={109} w={40} h={32} color={P} sw={2.6}>
            <rect x="43" y="111" width="36" height="28" rx="5" />
            <path d="M56 111v28M46.5 117.5h5M46.5 122h5M46.5 126.5h5" strokeWidth="2" />
          </Glyph>
          <NavRule />
          <Glyph x={109} y={110} w={14} h={32} color="#857a87" sw={2.6}>
            <path d="M110 123l6 6.500 6-6.500" />
          </Glyph>
          <NavArrows>
            <Glyph x={148} y={110} w={44} h={32} color="#63566a" sw={3.2}>
              <path d="M190 113l-13 13 13 13" strokeLinecap="round" />
            </Glyph>
            <Glyph x={194} y={110} w={72} h={32} color="#bdb0bf" sw={3}>
              <path d="M250 113l13 13-13 13" strokeLinecap="round" />
            </Glyph>
          </NavArrows>
        </NavGroup>
        <Address>
          <Glyph x={1382} y={113} w={19} h={28} color="#ab9eac" sw={2.4}>
            <path d="M1386 126v-5a5.5 5.5 0 0 1 11 0v5" />
            <rect x="1383" y="125" width="17" height="14" rx="2.5" fill="#ab9eac" stroke="none" />
          </Glyph>
          <Url>public.tableau.com</Url>
          <Glyph x={2036} y={112} w={40} h={30} color="#8a7f8c" sw={2.2}>
            <path d="M2051 130l-6 4v-5h-2a4 4 0 0 1-4-4v-7a4 4 0 0 1 4-4h11a4 4 0 0 1 4 4" />
            <path d="M2043.5 126l4-10 4 10M2045 122.5h5" strokeWidth="1.8" />
            <path d="M2057 119h14a4 4 0 0 1 4 4v8a4 4 0 0 1-4 4h-1v5l-6-5h-7a4 4 0 0 1-4-4v-8a4 4 0 0 1 4-4z" fill="#8a7f8c" stroke="none" />
            <path d="M2058 124.5h12M2064 122v2.5M2067.5 125c-1 4-5 7-9 8M2060.5 125c1 4 5 7 9 8" stroke="#fceffd" strokeWidth="1.6" />
          </Glyph>
          <Glyph x={2076} y={112} w={36} h={30} color="#8a7f8c" sw={2.4}>
            <path d="M2100 118.5a10 10 0 1 0 9 10M2097 113l6 6-6 6" />
          </Glyph>
        </Address>
        <WindowActions>
          <Glyph x={2727} y={104} w={34} h={40} color={P} sw={2.6}>
            <circle cx="2744" cy="125" r="15.5" />
            <path d="M2744 117v14M2738 126l6 6 6-6" />
          </Glyph>
          <Glyph x={2803} y={104} w={31} h={40} color={P} sw={2.6}>
            <path d="M2813 117h-5a3 3 0 0 0-3 3v17a4 4 0 0 0 4 4h20a4 4 0 0 0 4-4v-17a3 3 0 0 0-3-3h-5M2819 128v-22M2812.5 112l6.5-6.5 6.5 6.5" />
          </Glyph>
          <Glyph x={2876} y={104} w={31} h={40} color={P} sw={2.8}>
            <path d="M2878 124.5h27M2891.5 111v27" />
          </Glyph>
          <Glyph x={2949} y={104} w={37} h={40} color={P} sw={2.6}>
            <rect x="2958" y="116" width="25" height="24" rx="4.5" />
            <path d="M2957 133h-2a4 4 0 0 1-4-4v-16a4 4 0 0 1 4-4h17a4 4 0 0 1 4 4v2" />
          </Glyph>
        </WindowActions>
      </BrowserBar>
      <TabStrip>
        {PINNED.map((Icon, i) => (
          <PinnedTab key={i}><Icon /></PinnedTab>
        ))}
        {TABS.map((t) => (
          <Tab key={t.label} $active={t.active} $w={t.w}>
            {t.icon}
            <span>{t.label}</span>
          </Tab>
        ))}
      </TabStrip>
    </>
  );
}

/* ------------------------------------------------------------------ */
/* Workbook header and toolbar                                          */
/* ------------------------------------------------------------------ */

const Header = styled.header`
  height: 119px;
  flex: none;
  background: #242735;
  color: #e6e6e6;
  display: grid;
  grid-template-columns: 1176px 700px 1fr;
`;
const Menu = styled.nav`
  display: flex;
  gap: 41px;
  padding: 65px 0 0 20px;
  font-size: 25.5px;
  line-height: 34px;
  letter-spacing: -0.3px;
`;
const Title = styled.h1`
  margin: 0;
  padding: 38px 0 0 2px;
  text-align: center;
  font-size: 32px;
  line-height: 42px;
  font-weight: 600;
  letter-spacing: -0.42px;
`;
const HeaderRight = styled.div`
  display: flex;
  height: 99px;
  padding: 19px 0 0 481px;
`;
const Publish = styled.button`
  width: 240px;
  height: 48px;
  margin-top: 16px;
  border: 0;
  border-radius: 3px 0 0 3px;
  background: #2b6088;
  color: #fff;
  font: 600 25px Inter, sans-serif;
  letter-spacing: -0.85px;
`;
const PublishMore = styled.button`
  width: 48px;
  height: 48px;
  margin: 16px 32px 0 1px;
  border: 0;
  border-radius: 0 3px 3px 0;
  background: #2b6088;
  display: flex;
  align-items: center;
  justify-content: center;
`;
const Account = styled.div`
  width: 244px;
  height: 80px;
  border-left: 2px solid #05060c;
  border-right: 2px solid #05060c;
  padding: 10px 23px 0 20px;
  display: flex;
  justify-content: space-between;
  font-size: 26px;
  line-height: 29px;
  letter-spacing: -0.6px;
`;
const CloseBox = styled.div`
  padding: 27px 0 0 40px;
`;

const Toolbar = styled.div`
  height: 80px;
  flex: none;
  background: #f5f5f5;
  display: flex;
  align-items: center;
`;
const Rule = styled.div<{ $l: number; $r: number }>`
  width: 2px;
  height: 72px;
  flex: none;
  margin: 0 ${(p) => p.$r}px 0 ${(p) => p.$l}px;
  background: ${LINE};
`;
const Gap = styled.div<{ $w: number }>`
  flex: none;
  width: ${(p) => p.$w}px;
`;
const Pressed = styled.div<{ $w: number }>`
  width: ${(p) => p.$w}px;
  height: 60px;
  flex: none;
  border-radius: 3px;
  background: #e6e6e6;
  display: flex;
  align-items: center;
  justify-content: center;
`;
const ShowMe = styled.div`
  margin-left: auto;
  padding: 2px 48px 0 0;
  display: flex;
  align-items: center;
  gap: 18px;
  font-size: 24.5px;
  letter-spacing: -1px;
  color: #333;
`;
const TB = { y: 372, h: 44 };

const chartBox = (x: number) => (
  <path d={`M${x + 8} 409h-6a1 1 0 0 1-1-1v-27a1 1 0 0 1 1-1h28a1 1 0 0 1 1 1v12M${x + 8} 404v-8M${x + 16} 404v-18M${x + 23} 398v-6`} strokeWidth="2.6" />
);

function Bar() {
  return (
    <Toolbar>
      <Gap $w={18} />
      <Glyph x={18} {...TB} w={26} sw={2.2}><path d="M44 394H19M30 383l-11 11 11 11" /></Glyph>
      <Gap $w={40} />
      <Glyph x={84} {...TB} w={26} sw={2.2}><path d="M84 394h25M98 383l11 11-11 11" /></Glyph>
      <Gap $w={32} />
      <Glyph x={142} {...TB} w={36} sw={2.6}>
        <path d="M152 388h-2a6.5 6.5 0 0 0-6.5 6.500A6.5 6.5 0 0 0 150 401h20a6.5 6.5 0 0 0 5-11M152 388h16" />
        <path d="M164 382l7 6-7 6z" fill={INK} stroke="none" />
      </Glyph>
      <Caret $w={15} $h={9} $ml={23} />
      <Rule $l={32} $r={30} />
      <Glyph x={280} {...TB} w={28} sw={2.2}>
        <ellipse cx="291" cy="384.5" rx="10" ry="5" />
        <path d="M281 385v18c0 3 4 5 7 5.500M301 385v9" />
        <path d="M300.5 399v16M292 407h16" strokeWidth="4" />
      </Glyph>
      <Gap $w={35} />
      <Glyph x={343} {...TB} w={26} sw={2.2}>
        <ellipse cx="354.5" cy="384.5" rx="10" ry="5" />
        <path d="M344.5 385v18c0 3 4 5 9 5.500M364.5 385v10" />
        <path d="M360 399v14M366 399v14" strokeWidth="3" />
      </Glyph>
      <Rule $l={33} $r={28} />
      <Glyph x={432} {...TB} w={39} sw={2}>
        {chartBox(432)}
        <path d="M461.5 399v16M453.5 407h16" strokeWidth="4" />
      </Glyph>
      <Caret $w={9} $h={7} $ml={1} />
      <Gap $w={29} />
      <Glyph x={510} {...TB} w={36} sw={2.2}>
        <rect x="523" y="378" width="22" height="18" rx="1" />
        <path d="M529 392v-5M534 392v-9M539.5 392v-6M519 392h-7a1 1 0 0 0-1 1v16a1 1 0 0 0 1 1h21a1 1 0 0 0 1-1v-9M516 406v-5M521.5 406v-5M527 406v-5" />
      </Glyph>
      <Gap $w={30} />
      <Glyph x={576} {...TB} w={40} sw={2}>
        {chartBox(576)}
        <path d="M600 399l13 13M613 399l-13 13" strokeWidth="3.4" />
      </Glyph>
      <Caret $w={10} $h={7} $ml={4} />
      <Rule $l={30} $r={27} />
      <Glyph x={689} {...TB} w={34} color="#c2c2c2" sw={2.2}>
        <rect x="691" y="381" width="6" height="6" /><rect x="701" y="381" width="6" height="6" /><rect x="711" y="381" width="6" height="6" />
        <rect x="691" y="391" width="6" height="6" /><rect x="691" y="401" width="6" height="6" />
        <path d="M719 392c1 9-5 16-16 16M715 394l4.5-4 4 4M708 403l-6 5 5 4" />
      </Glyph>
      <Gap $w={29} />
      <Glyph x={752} {...TB} w={35} sw={2.2}>
        <path d="M757 381v26" /><path d="M752 403h10l-5 7z" fill={INK} stroke="none" />
        <rect x="765" y="382" width="8" height="6" rx="1" /><rect x="765" y="391.5" width="14" height="6" rx="1" /><rect x="765" y="402" width="20" height="6" rx="1" />
      </Glyph>
      <Gap $w={29} />
      <Glyph x={816} {...TB} w={35} sw={2.2}>
        <path d="M821 381v26" /><path d="M816 403h10l-5 7z" fill={INK} stroke="none" />
        <rect x="829" y="382" width="20" height="6" rx="1" /><rect x="829" y="391.5" width="14" height="6" rx="1" /><rect x="829" y="402" width="8" height="6" rx="1" />
      </Glyph>
      <Gap $w={31} />
      <Glyph x={882} {...TB} w={23} sw={2.4}><path d="M903 384v-4h-20l12 14-12 14h20v-4" /></Glyph>
      <Caret $w={10} $h={7} $ml={5} />
      <Rule $l={31} $r={13} />
      <Pressed $w={66}>
        <Glyph x={978} {...TB} w={30} sw={2.2}>
          <path d="M996 376l6 4-10 20-6-4zM984 399l3 2" /><path d="M980 409h25" strokeWidth="4" />
        </Glyph>
        <Caret $w={10} $h={7} $ml={-1} />
      </Pressed>
      <Gap $w={4} />
      <Pressed $w={60}><TextIcon size={34} /></Pressed>
      <Gap $w={19} />
      <Glyph x={1115} {...TB} w={32} color="#b5b5b5" sw={2.2}>
        <path d="M1132 386h-15v22h28v-17" strokeDasharray="4 2.500" />
        <path d="M1146 377c-6 4-9 9-10 14l3 1c4-4 7-9 7-15zM1134 394c-3 1-3 5-5 7 4 0 8-1 8-5z" fill={INK} stroke="none" />
      </Glyph>
      <Gap $w={29} />
      <Glyph x={1176} {...TB} w={38} sw={2.2}>
        <rect x="1177.5" y="386" width="28" height="22.5" rx="1" />
        <path d="M1177.5 380h27.5M1177.5 377v6M1205 377v6M1211.5 386v22M1208.5 386h6M1208.5 408h6" />
      </Glyph>
      <Caret $w={10} $h={7} $ml={8} />
      <Rule $l={30} $r={25} />
      <Glyph x={1289} {...TB} w={42} sw={2.2}>
        <rect x="1291" y="382" width="8" height="6" rx="1" /><rect x="1291" y="392" width="8" height="6" rx="1" /><rect x="1291" y="402" width="8" height="6" rx="1" />
        <rect x="1303" y="382" width="26" height="26" rx="1" />
        <path d="M1309.5 405v-7M1316 405v-17M1322 405v-12" strokeWidth="3.6" />
      </Glyph>
      <Caret $w={10} $h={7} $ml={9} />
      <Rule $l={26} $r={28} />
      <Glyph x={1406} {...TB} w={30} sw={2.4}>
        <path d="M1414 396h-6.500v-16h28v16h-6.500M1421.5 387v16" /><path d="M1415 401h13l-6.500 8z" fill={INK} stroke="none" />
      </Glyph>
      <ShowMe>
        <Glyph x={2830} y={378} w={28} h={32} sw={0}>
          <rect x="2830" y="380" width="22" height="6" fill="#85719a" />
          <rect x="2830" y="388" width="28" height="6" fill="#86a0c4" />
          <rect x="2830" y="396" width="10" height="6" fill="#e9a680" />
          <rect x="2830" y="404" width="16" height="6" fill="#e77a80" />
        </Glyph>
        Show Me
      </ShowMe>
    </Toolbar>
  );
}

const MENU = ['File', 'Data', 'Worksheet', 'Dashboard', 'Analysis', 'Map', 'Format', 'Help'];

function TopHeader() {
  return (
    <Header>
      <Menu>{MENU.map((m) => <span key={m}>{m}</span>)}</Menu>
      <Title>New Workbook (Tableau Public)</Title>
      <HeaderRight>
        <Publish>Publish As...</Publish>
        <PublishMore><Caret $w={15} $h={10} $c="#fff" /></PublishMore>
        <Account>
          <span>AKARSH<br />REDDY</span>
          <Caret $w={16} $h={10} $mt={10} $c="#fff" />
        </Account>
        <CloseBox>
          <Glyph x={2962} y={280} w={22} h={22} color="#c9c9cc" sw={3}><path d="M2963 281l19 19M2982 281l-19 19" /></Glyph>
        </CloseBox>
      </HeaderRight>
    </Header>
  );
}

/* ------------------------------------------------------------------ */
/* Shared worksheet icons                                               */
/* ------------------------------------------------------------------ */

const TBox = styled.span<{ $s: number }>`
  width: ${(p) => p.$s}px;
  height: ${(p) => p.$s - (p.$s > 30 ? 4 : 0)}px;
  border: 2px solid ${INK};
  border-radius: 2px;
  display: flex;
  align-items: center;
  justify-content: center;
  font: ${(p) => (p.$s > 30 ? 21 : 19)}px/1 "Liberation Serif", serif;
  color: #555;
`;
const TextIcon = ({ size = 28 }: { size?: number }) => <TBox $s={size}>T</TBox>;
const ColorIcon = () => (
  <GlyphSvg width="28" height="28" viewBox="0 0 28 28">
    <circle cx="6.5" cy="6.5" r="6.5" fill="#85719a" />
    <circle cx="21.5" cy="6.5" r="6.5" fill="#e77a80" />
    <circle cx="6.5" cy="21.5" r="6.5" fill="#e9a680" />
    <circle cx="21.5" cy="21.5" r="6.5" fill="#86a0c4" />
  </GlyphSvg>
);
const SizeIcon = () => (
  <GlyphSvg width="28" height="28" viewBox="0 0 28 28" fill="none" stroke={INK} strokeWidth="2">
    <circle cx="8" cy="20" r="7" />
    <path d="M5.5 17.5l5 4.500M5 11A11.2 11.2 0 1 1 18 23" />
  </GlyphSvg>
);
const DetailIcon = () => (
  <GlyphSvg width="28" height="28" viewBox="0 0 28 28" fill="none" stroke={INK} strokeWidth="2">
    <circle cx="14" cy="4" r="4" fill={INK} stroke="none" />
    <path d="M14 8v9M4 18v-3.500h20V18" />
    <circle cx="4" cy="24" r="3" />
    <circle cx="14" cy="24" r="3" />
    <circle cx="24" cy="24" r="3" />
  </GlyphSvg>
);
const TipIcon = () => (
  <GlyphSvg width="28" height="28" viewBox="0 0 28 28" fill="none" stroke={INK} strokeWidth="2">
    <path d="M2 1h24a1 1 0 0 1 1 1v14a1 1 0 0 1-1 1H14l-6 6.500V17H2a1 1 0 0 1-1-1V2a1 1 0 0 1 1-1z" />
  </GlyphSvg>
);

/* ------------------------------------------------------------------ */
/* Data pane                                                            */
/* ------------------------------------------------------------------ */

const Body = styled.div`
  height: 1433px;
  flex: none;
  display: flex;
  background: #f2f2f2;
`;
const DataPane = styled.aside`
  width: 400px;
  height: 1433px;
  flex: none;
  border: solid ${LINE};
  border-width: 2px 2px 0 0;
  background: #fff;
  display: flex;
  flex-direction: column;
`;
const PaneTabs = styled.div`
  height: 53px;
  flex: none;
  display: flex;
  font-size: 25.5px;
`;
const PaneTab = styled.div<{ $on?: boolean }>`
  width: ${(p) => (p.$on ? 172 : 226)}px;
  padding: 0 14px 0 24px;
  display: flex;
  align-items: center;
  justify-content: space-between;
  font-weight: ${(p) => (p.$on ? 700 : 400)};
  letter-spacing: ${(p) => (p.$on ? -0.3 : 0)}px;
  ${(p) =>
    !p.$on &&
    css`
      background: #fafafa;
      border-left: 2px solid ${LINE};
      border-bottom: 2px solid ${LINE};
    `}
`;
const Source = styled.div`
  height: 67px;
  flex: none;
  border-bottom: 2px solid ${LINE};
  display: flex;
  gap: 12px;
  padding: 16px 0 0 10px;
  font-size: 24px;
  line-height: 30px;
  letter-spacing: -0.5px;
`;
const SearchRow = styled.div`
  height: 84px;
  flex: none;
  display: flex;
  align-items: flex-start;
  padding: 24px 0 0 12px;
`;
const SearchBox = styled.div`
  width: 260px;
  height: 48px;
  border: 2px solid #222;
  border-radius: 2px;
  display: flex;
  align-items: center;
  padding-left: 10px;
  gap: 19px;
  font-size: 24px;
  line-height: 44px;
  letter-spacing: -0.6px;
  color: #666;
`;
const SearchTools = styled.div`
  height: 48px;
  display: flex;
  align-items: center;
  padding-left: 12px;
`;
const SearchRule = styled.div`
  width: 2px;
  height: 44px;
  margin: 0 23px 0 16px;
  background: ${LINE};
`;
const FieldScroll = styled.div`
  flex: 1;
  display: flex;
  overflow: hidden;
`;
const Fields = styled.div`
  flex: 1;
`;
const Track = styled.div`
  width: 18px;
  background: #f3f3f3;
`;
const Thumb = styled.div`
  height: 114px;
  border-radius: 2px;
  background: #c8c8c8;
`;
const TablesHead = styled.div`
  height: 52px;
  padding-left: 36px;
  font-size: 25px;
  line-height: 54px;
  font-weight: 700;
  letter-spacing: -0.7px;
`;
const Field = styled.div<{ $italic?: boolean }>`
  height: 42px;
  display: grid;
  grid-template-columns: 60px 1fr;
  padding-left: 42px;
  align-items: center;
  font-size: 24px;
  letter-spacing: -0.62px;
  white-space: nowrap;
  font-style: ${(p) => (p.$italic ? 'italic' : 'normal')};
`;
const Abc = styled.span`
  font-size: 19px;
  font-style: normal;
  letter-spacing: -0.5px;
  color: #5b94b0;
`;
const FieldRule = styled.div`
  height: 2px;
  margin: 2px 14px 0 36px;
  background: ${LINE};
`;

const HashIcon = () => (
  <Glyph x={0} y={0} w={28} h={22} color="#4fae84" sw={2}>
    <path d="M4 7h20M4 13h20M11 0v20M17 0v20" />
  </Glyph>
);
const GlobeIcon = () => (
  <Glyph x={0} y={0} w={28} h={24} color="#4f88a8" sw={2}>
    <circle cx="15" cy="12" r="10" />
    <ellipse cx="15" cy="12" rx="4.5" ry="10" />
    <path d="M6.5 7.5h17M6.5 16.5h17" />
  </Glyph>
);
const DIMENSIONS: [string, 'abc' | 'globe' | 'hash', boolean?][] = [
  ['Code', 'abc'], ['Country', 'globe'], ['Income', 'abc'], ['Region', 'abc'], ['Year', 'hash'], ['Measure Names', 'abc', true],
];
const MEASURES = [
  'Cfa Che', 'Che', 'Che Gdp', 'Che Ncu Pc', 'Che Ncu2020', 'Che Ncu2020 Pc', 'Che Pc Usd', 'Che Ppp', 'Che Ppp Pc',
  'Che Ppp2020', 'Che Ppp2020 Pc', 'Che Usd', 'Che Usd2020', 'Che Usd2020 Pc', 'Chi Che', 'Dom Che', 'F1', 'Fs',
  'Fs Gdp', 'Fs Ncu Pc', 'Fs Ncu2020', 'Fs Ncu2020 Pc',
];

function DataPanel() {
  return (
    <DataPane>
      <PaneTabs>
        <PaneTab $on>Data</PaneTab>
        <PaneTab>
          Analytics
          <Glyph x={0} y={0} w={12} h={22} sw={2.2}><path d="M11 2L2 11l9 9" /></Glyph>
        </PaneTab>
      </PaneTabs>
      <Source>
        <Glyph x={10} y={505} w={28} h={30} sw={2}>
          <path d="M23 507c-5-2-12-1-12 3v12c0 2 1 3 4 4M15 514v5M19 519v-5c0-2 4-3 6-3s6 1 6 3-3 3-6 3-6-1-6-3M31 514v6M20 524l3 4" />
          <circle cx="31" cy="527" r="7" fill="#4377ab" stroke="none" />
        </Glyph>
        ghed_clean
      </Source>
      <SearchRow>
        <SearchBox>
          <Glyph x={24} y={591} w={25} h={26} color="#222" sw={2.4}>
            <circle cx="39" cy="601" r="8.5" /><path d="M33 607l-8.500 8.500" />
          </Glyph>
          Search
        </SearchBox>
        <SearchTools>
          <Glyph x={284} y={592} w={23} h={24} sw={2}><path d="M285 595h20.500l-8 10v9h-4.500v-9z" /></Glyph>
          <Caret $w={10} $h={6} $ml={3} />
          <SearchRule />
          <Caret $w={15} $h={10} />
        </SearchTools>
      </SearchRow>
      <FieldScroll>
        <Fields>
          <TablesHead>Tables</TablesHead>
          {DIMENSIONS.map(([name, kind, it]) => (
            <Field key={name} $italic={it}>
              {kind === 'abc' ? <Abc>Abc</Abc> : kind === 'globe' ? <GlobeIcon /> : <HashIcon />}
              <span>{name}</span>
            </Field>
          ))}
          <FieldRule />
          {MEASURES.map((name) => (
            <Field key={name}>
              <HashIcon />
              <span>{name}</span>
            </Field>
          ))}
        </Fields>
        <Track><Thumb /></Track>
      </FieldScroll>
    </DataPane>
  );
}

/* ------------------------------------------------------------------ */
/* Cards                                                                */
/* ------------------------------------------------------------------ */

const CardColumn = styled.div`
  width: 356px;
  flex: none;
  margin: 0 12px;
  display: flex;
  flex-direction: column;
  gap: 12px;
`;
const Card = styled.section<{ $h: number }>`
  height: ${(p) => p.$h}px;
  border: 2px solid ${LINE};
  border-radius: 2px;
  background: #fafafa;
  padding: 0 12px;
`;
const CardHead = styled.div`
  height: 52px;
  display: flex;
  align-items: center;
  gap: 10px;
  padding: 0 0 2px 4px;
  font-size: 24px;
  letter-spacing: -0.5px;
`;
const MarkType = styled.div`
  height: 48px;
  margin: 6px 0 12px;
  border: 2px solid #222;
  border-radius: 2px;
  display: flex;
  align-items: center;
  padding: 0 11px 0 16px;
  gap: 13px;
  font-size: 24px;
  line-height: 42px;
  letter-spacing: -0.2px;
`;
const Grow = styled.span`
  flex: 1;
`;
const EncodingGrid = styled.div`
  display: grid;
  grid-template-columns: repeat(3, 100px);
  gap: 12px 14px;
`;
const Encoding = styled.button`
  height: 100px;
  padding: 6px 0 0;
  border: 2px solid ${LINE};
  border-radius: 2px;
  background: none;
  display: flex;
  flex-direction: column;
  align-items: center;
  justify-content: center;
  gap: 11px;
  font: 22.5px/28px Inter, sans-serif;
  letter-spacing: -0.5px;
  color: #333;
`;
const PillList = styled.div`
  margin-top: 24px;
  display: flex;
  flex-direction: column;
  gap: 6px;
`;
const PillRow = styled.div`
  display: flex;
  align-items: center;
  gap: 16px;
  padding-left: 8px;
`;
const Pill = styled.div<{ $green?: boolean }>`
  flex: 1;
  height: 40px;
  border-radius: 20px;
  padding-left: 22px;
  background: ${(p) => (p.$green ? '#4fae84' : '#5e94b1')};
  color: #fff;
  font-size: 24px;
  line-height: 42px;
  letter-spacing: -0.55px;
`;
const ChevronUp = () => (
  <Glyph x={0} y={0} w={20} h={12} sw={2}><path d="M1 11l9-9 9 9" /></Glyph>
);

function Cards() {
  return (
    <CardColumn>
      <Card $h={92}><CardHead><ChevronUp />Pages</CardHead></Card>
      <Card $h={92}><CardHead><ChevronUp />Filters</CardHead></Card>
      <Card $h={611}>
        <CardHead><ChevronUp />Marks</CardHead>
        <MarkType>
          <Glyph x={0} y={0} w={24} h={24} sw={2}><circle cx="12" cy="12" r="11" /></Glyph>
          <Grow>Circle</Grow>
          <Caret $w={15} $h={10} />
        </MarkType>
        <EncodingGrid>
          <Encoding><ColorIcon />Color</Encoding>
          <Encoding><SizeIcon />Size</Encoding>
          <Encoding><TextIcon />Label</Encoding>
          <Encoding><DetailIcon />Detail</Encoding>
          <Encoding><TipIcon />Tooltip</Encoding>
        </EncodingGrid>
        <PillList>
          <PillRow><SizeIcon /><Pill $green>SUM(Oop Pc Usd)</Pill></PillRow>
          <PillRow><TextIcon /><Pill>Region</Pill></PillRow>
          <PillRow><TextIcon /><Pill>Country</Pill></PillRow>
          <PillRow><DetailIcon /><Pill $green>Year</Pill></PillRow>
          <PillRow><ColorIcon /><Pill>Region</Pill></PillRow>
        </PillList>
      </Card>
    </CardColumn>
  );
}

/* ------------------------------------------------------------------ */
/* Worksheet                                                            */
/* ------------------------------------------------------------------ */

const Work = styled.main`
  width: 2232px;
  flex: none;
  display: flex;
  flex-direction: column;
  gap: 12px;
`;
const Shelf = styled.div`
  height: 56px;
  flex: none;
  border: 2px solid ${LINE};
  border-radius: 2px;
  background: #fafafa;
  display: flex;
`;
const ShelfName = styled.div`
  width: 170px;
  border-right: 2px solid ${LINE};
  display: flex;
  align-items: center;
  gap: 9px;
  padding: 0 0 2px 11px;
  font-size: 24px;
  letter-spacing: -0.2px;
`;
const Viz = styled.div`
  display: flex;
  gap: 12px;
`;
const Sheet = styled.div`
  position: relative;
  width: 1896px;
  height: 1286px;
  border: 2px solid ${LINE};
  background: #fff;
`;
const SheetTitle = styled.div`
  position: absolute;
  left: 14px;
  top: 18px;
  font: 300 40px/58px "Open Sans", "Noto Sans", sans-serif;
  letter-spacing: 1px;
  color: #2b2b2b;
`;
const Plot = styled.svg`
  display: block;
  width: 1892px;
  height: 1282px;
`;
const Tip = styled.div`
  position: absolute;
  left: 554px;
  top: 1028px;
  width: 316px;
  height: 196px;
  border: 2px solid ${LINE};
  background: #fff;
  box-shadow: 2px 4px 3px rgba(0, 0, 0, 0.28);
  display: grid;
  grid-template-columns: 149px 1fr;
  grid-auto-rows: 36px;
  align-items: center;
  padding: 24px 0 0 24px;
  font: 25.5px/36px "Noto Sans", sans-serif;
  white-space: nowrap;
`;
const TipKey = styled.span`
  color: #666;
  font-family: "Open Sans", "Noto Sans", sans-serif;
  font-weight: 300;
`;
const TipValue = styled.span`
  color: #333;
  font-weight: 600;
`;
const Side = styled.div`
  width: 324px;
  display: flex;
  flex-direction: column;
  gap: 12px;
`;
const EmptyCard = styled.div`
  height: 28px;
  border: 2px solid ${LINE};
  background: #fff;
`;
const Legend = styled.div`
  height: 294px;
  border: 2px solid ${LINE};
  background: #fff;
  font-family: "Noto Sans", sans-serif;
`;
const LegendTitle = styled.div`
  height: 44px;
  padding-left: 6px;
  font-size: 23.5px;
  line-height: 46px;
  font-weight: 600;
`;
const LegendRow = styled.div`
  height: 40px;
  display: flex;
  align-items: center;
  gap: 11px;
  padding-left: 12px;
  font-family: "Open Sans", "Noto Sans", sans-serif;
  font-size: 24px;
  line-height: 36px;
`;
const LegendLabel = styled.span`
  padding-bottom: 4px;
`;
const Swatch = styled.span<{ $c: string }>`
  width: 28px;
  height: 28px;
  margin-bottom: 2px;
  border-radius: 2px;
  background: ${(p) => p.$c};
`;

const TIP: [string, string][] = [['Country:', 'Belarus'], ['Region:', 'EUR'], ['Year:', '2017'], ['Oop Pc Usd:', '88']];

function Worksheet() {
  return (
    <Work>
      <Shelf>
        <ShelfName>
          <Glyph x={0} y={0} w={26} h={24} sw={4}><path d="M5 0v4M13 0v4M21 0v4M5 6v18M13 6v18M21 6v18" /></Glyph>
          Columns
        </ShelfName>
      </Shelf>
      <Shelf>
        <ShelfName>
          <Glyph x={0} y={0} w={26} h={20} sw={4}><path d="M1 2h4M1 10h4M1 18h4M7 2h18M7 10h18M7 18h18" /></Glyph>
          Rows
        </ShelfName>
      </Shelf>
      <Viz>
        <Sheet>
          <Plot viewBox="782 572 1892 1282">
            {ORDER.map((g) => (
              <g key={g} fill={COLORS[g]}>
                {MARKS.filter((m) => m.g === g).map((m, i) => (
                  <circle key={i} cx={m.x.toFixed(1)} cy={m.y.toFixed(1)} r={m.r.toFixed(2)} />
                ))}
              </g>
            ))}
            <circle cx="1303.7" cy="1564.4" r="6" fill={COLORS.EUR} stroke="#000" strokeWidth="2.2" />
          </Plot>
          <SheetTitle>Sheet 2</SheetTitle>
          <Tip>
            {TIP.map(([k, v]) => (
              <React.Fragment key={k}>
                <TipKey>{k}</TipKey>
                <TipValue>{v}</TipValue>
              </React.Fragment>
            ))}
          </Tip>
        </Sheet>
        <Side>
          <EmptyCard />
          <Legend>
            <LegendTitle>Region</LegendTitle>
            {ORDER.map((g) => (
              <LegendRow key={g}><Swatch $c={COLORS[g]} /><LegendLabel>{g}</LegendLabel></LegendRow>
            ))}
          </Legend>
        </Side>
      </Viz>
    </Work>
  );
}

/* ------------------------------------------------------------------ */
/* Sheet tabs and status                                                */
/* ------------------------------------------------------------------ */

const SheetTabs = styled.div`
  height: 63px;
  flex: none;
  border-top: 2px solid #c8c8c8;
  border-bottom: 2px solid #c8c8c8;
  background: #e6e6e6;
  display: flex;
`;
const SheetTab = styled.div<{ $w: number; $pl?: number; $on?: boolean }>`
  width: ${(p) => p.$w}px;
  border-right: 2px solid #c8c8c8;
  padding: 0 0 6px ${(p) => p.$pl ?? 13}px;
  display: flex;
  align-items: center;
  gap: 12px;
  font-size: 24px;
  letter-spacing: -0.4px;
  white-space: nowrap;
  color: ${(p) => (p.$on ? '#333' : '#666')};
  background: ${(p) => (p.$on ? '#fafafa' : 'none')};
  font-weight: ${(p) => (p.$on ? 700 : 400)};
`;
const Status = styled.footer`
  flex: 1;
  background: #ebebeb;
  display: flex;
  align-items: center;
  gap: 25px;
  padding-left: 19px;
  font-size: 20px;
  letter-spacing: -0.48px;
`;

function Footer() {
  return (
    <>
      <SheetTabs>
        <SheetTab $w={249} $pl={21}>
          <Glyph x={0} y={-2} w={17} h={26} sw={2}>
            <rect x="1.5" y="1" width="14" height="20" rx="5" /><path d="M2 6c3 3 10 3 13.500 0" />
          </Glyph>
          Data Source
        </SheetTab>
        <SheetTab $w={109}>Sheet 1</SheetTab>
        <SheetTab $w={117} $on>Sheet 2</SheetTab>
        <SheetTab $w={64} $pl={17}>
          <Glyph x={492} y={1880} w={32} h={32} sw={2}>
            <path d="M506 1903h-12v-21h20v10M500 1898v-4M504 1898v-10M508 1898v-7" /><path d="M514.5 1896v16M506.5 1904h16" strokeWidth="4" />
          </Glyph>
        </SheetTab>
        <SheetTab $w={64} $pl={17}>
          <Glyph x={556} y={1880} w={32} h={32} sw={2}>
            <path d="M570 1903h-12v-21h20v11M558 1892h20M568 1882v21" /><path d="M578.5 1896v16M570.5 1904h16" strokeWidth="4" />
          </Glyph>
        </SheetTab>
        <SheetTab $w={64} $pl={17}>
          <Glyph x={620} y={1880} w={32} h={32} sw={2}>
            <path d="M632 1905l-10-4v-18l10 4 10-4v11M632 1887v18" /><path d="M642.5 1896v16M634.5 1904h16" strokeWidth="4" />
          </Glyph>
        </SheetTab>
      </SheetTabs>
      <Status>
        <span>4224 marks</span>
        <span>1 row by 1 column</span>
        <span>SUM(Oop Pc Usd): 723,796</span>
      </Status>
    </>
  );
}

export default function App() {
  return (
    <Window>
      <Global />
      <Notch />
      <Browser />
      <TopHeader />
      <Bar />
      <Body>
        <DataPanel />
        <Cards />
        <Worksheet />
      </Body>
      <Footer />
    </Window>
  );
}
